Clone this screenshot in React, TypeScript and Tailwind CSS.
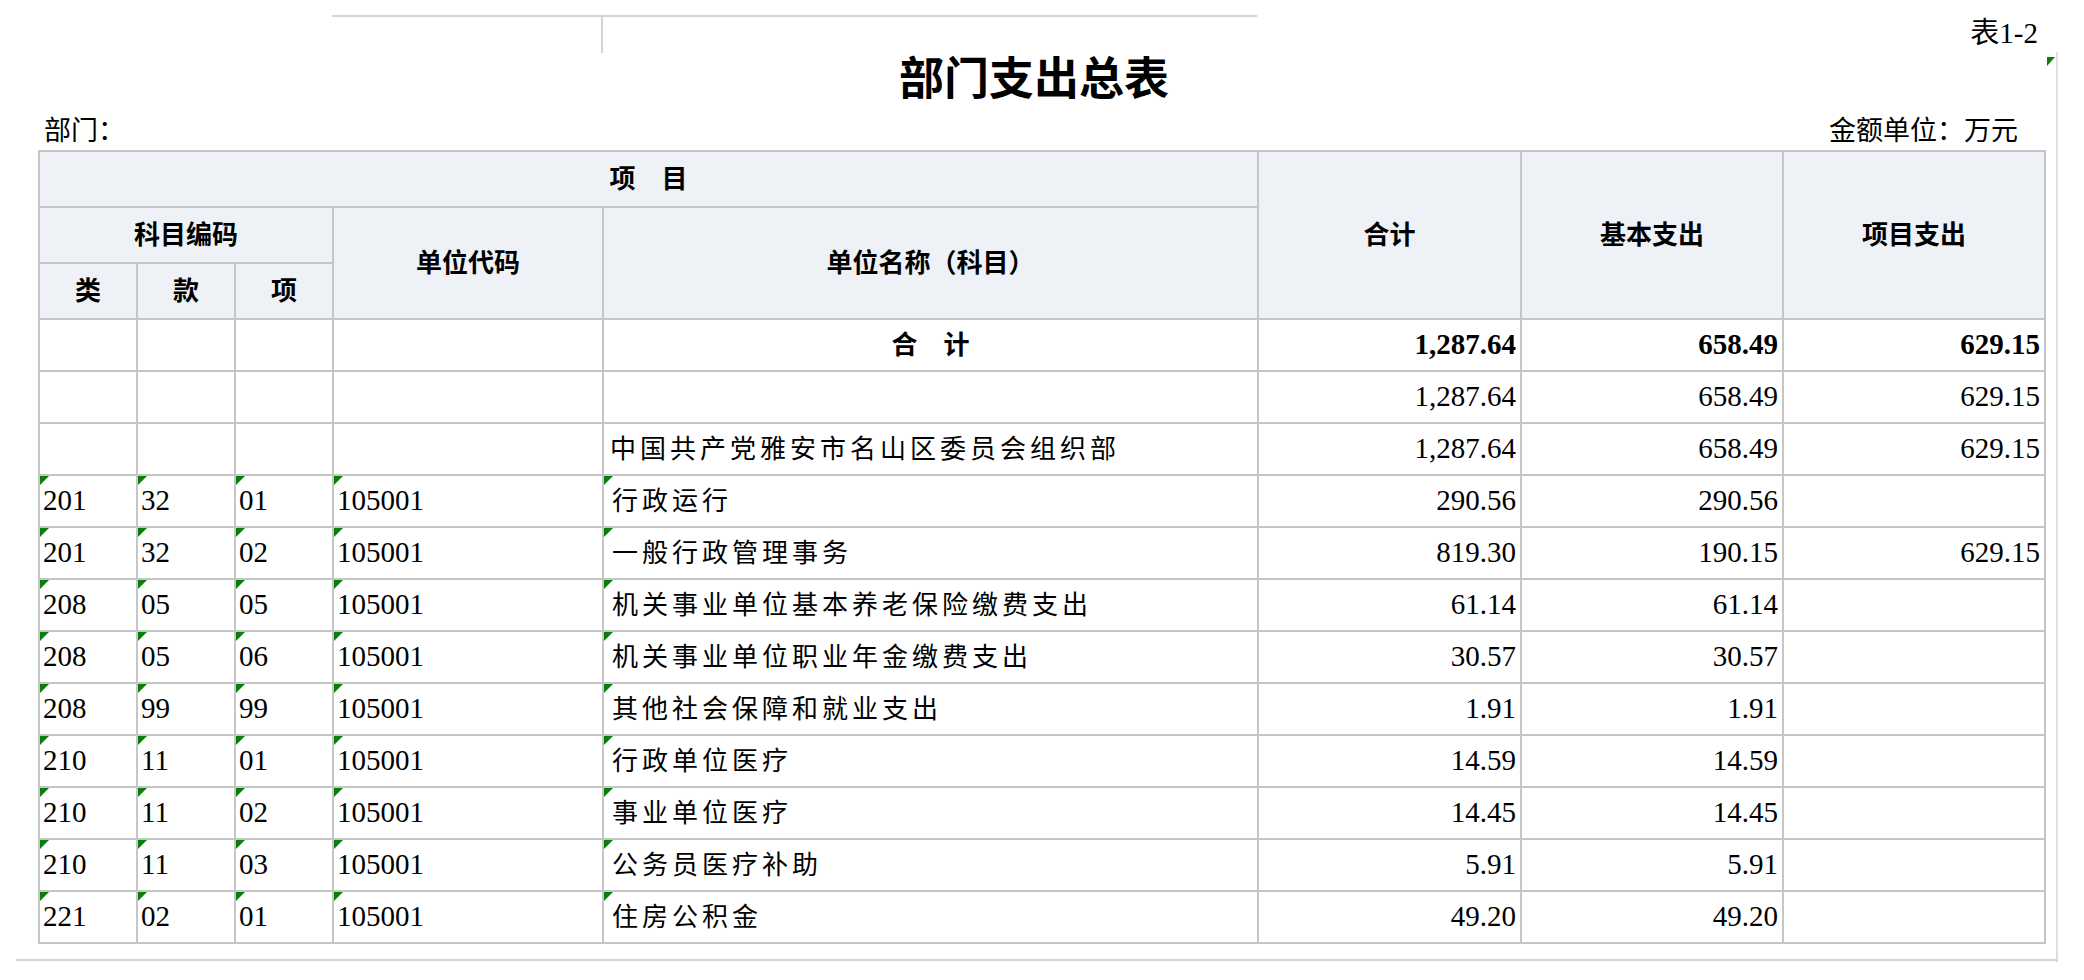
const rows = [
  ["201", "32", "01", "105001", "行政运行", "290.56", "290.56", ""],
  ["201", "32", "02", "105001", "一般行政管理事务", "819.30", "190.15", "629.15"],
  ["208", "05", "05", "105001", "机关事业单位基本养老保险缴费支出", "61.14", "61.14", ""],
  ["208", "05", "06", "105001", "机关事业单位职业年金缴费支出", "30.57", "30.57", ""],
  ["208", "99", "99", "105001", "其他社会保障和就业支出", "1.91", "1.91", ""],
  ["210", "11", "01", "105001", "行政单位医疗", "14.59", "14.59", ""],
  ["210", "11", "02", "105001", "事业单位医疗", "14.45", "14.45", ""],
  ["210", "11", "03", "105001", "公务员医疗补助", "5.91", "5.91", ""],
  ["221", "02", "01", "105001", "住房公积金", "49.20", "49.20", ""],
]

const cell = "border-2 border-[#c6c6c6] h-[52px] p-0 relative"
const num = cell + " text-right pr-[4px] text-[29px]"
const head = "border-2 border-[#c6c6c6] bg-[#eef1f6] font-bold text-center p-0"

function Flag() {
  return (
    <span className="absolute left-0 top-0 w-0 h-0 border-t-[9px] border-t-[#0a7d0a] border-r-[9px] border-r-transparent" />
  )
}

export default function App() {
  return (
    <div
      className="relative w-[2084px] h-[980px] bg-white text-black text-[26px] overflow-hidden"
      style={{ fontFamily: '"Liberation Serif", "Noto Sans CJK SC", serif' }}
    >
      {/* sheet frame lines */}
      <div className="absolute left-[332px] top-[15px] w-[925px] h-[2px] bg-[#d4d4d4]" />
      <div className="absolute left-[601px] top-[16px] w-[2px] h-[37px] bg-[#d4d4d4]" />
      <div className="absolute left-[2056px] top-[52px] w-[2px] h-[910px] bg-[#e0e0e0]" />
      <div className="absolute left-[16px] top-[959px] w-[2042px] h-[2px] bg-[#d4d4d4]" />
      <div className="absolute left-[2047px] top-[57px] w-0 h-0 border-t-[9px] border-t-[#0a7d0a] border-r-[8px] border-r-transparent" />

      <div className="pl-[38px] pr-[40px]">
        <div className="h-[56px] flex justify-end items-center pt-[12px] pr-[6px] text-[29px]">表1-2</div>
        <div className="h-[48px] text-center font-bold text-[45px] leading-[48px] pr-[14px]">部门支出总表</div>
        <div className="h-[46px] flex justify-between items-center pt-[8px] text-[27px]">
          <span className="pl-[6px]">部门：</span>
          <span className="pr-[26px]">金额单位：万元</span>
        </div>
        <table className="border-collapse table-fixed w-[2006px]">
          <colgroup>
            <col className="w-[98px]" />
            <col className="w-[98px]" />
            <col className="w-[98px]" />
            <col className="w-[270px]" />
            <col className="w-[655px]" />
            <col className="w-[263px]" />
            <col className="w-[262px]" />
            <col className="w-[262px]" />
          </colgroup>
          <thead>
            <tr className="h-[56px]">
              <th colSpan={5} className={head}>项　目</th>
              <th rowSpan={3} className={head}>合计</th>
              <th rowSpan={3} className={head}>基本支出</th>
              <th rowSpan={3} className={head}>项目支出</th>
            </tr>
            <tr className="h-[56px]">
              <th colSpan={3} className={head}>科目编码</th>
              <th rowSpan={2} className={head}>单位代码</th>
              <th rowSpan={2} className={head}>单位名称（科目）</th>
            </tr>
            <tr className="h-[56px]">
              <th className={head}>类</th>
              <th className={head}>款</th>
              <th className={head}>项</th>
            </tr>
          </thead>
          <tbody>
            <tr>
              <td className={cell} />
              <td className={cell} />
              <td className={cell} />
              <td className={cell} />
              <td className={cell + " text-center font-bold"}>合　计</td>
              <td className={num + " font-bold"}>1,287.64</td>
              <td className={num + " font-bold"}>658.49</td>
              <td className={num + " font-bold"}>629.15</td>
            </tr>
            <tr>
              <td className={cell} />
              <td className={cell} />
              <td className={cell} />
              <td className={cell} />
              <td className={cell} />
              <td className={num}>1,287.64</td>
              <td className={num}>658.49</td>
              <td className={num}>629.15</td>
            </tr>
            <tr>
              <td className={cell} />
              <td className={cell} />
              <td className={cell} />
              <td className={cell} />
              <td className={cell + " pl-[6px] tracking-[4px]"}>中国共产党雅安市名山区委员会组织部</td>
              <td className={num}>1,287.64</td>
              <td className={num}>658.49</td>
              <td className={num}>629.15</td>
            </tr>
            {rows.map((r, i) => (
              <tr key={i}>
                {r.slice(0, 4).map((v, j) => (
                  <td key={j} className={cell + " pl-[3px] text-[29px]"}>
                    <Flag />
                    {v}
                  </td>
                ))}
                <td className={cell + " pl-[8px] tracking-[4px]"}>
                  <Flag />
                  {r[4]}
                </td>
                {r.slice(5).map((v, j) => (
                  <td key={j} className={num}>{v}</td>
                ))}
              </tr>
            ))}
          </tbody>
        </table>
      </div>
    </div>
  )
}
